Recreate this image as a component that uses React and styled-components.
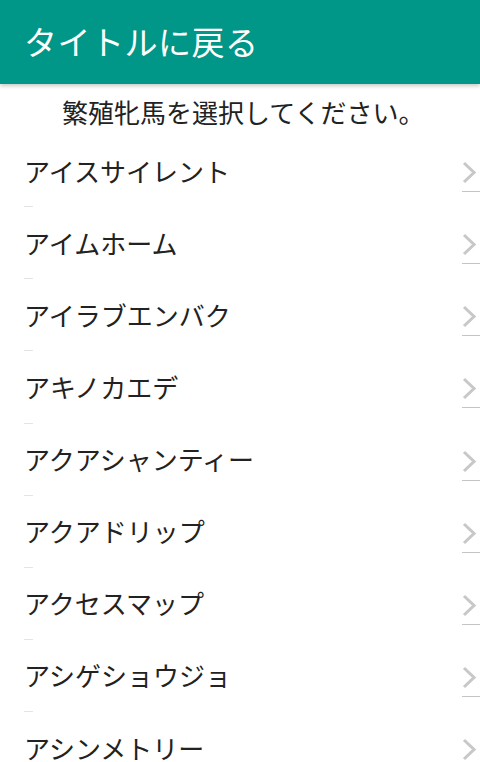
import React from 'react';
import styled, { createGlobalStyle } from 'styled-components';

const mares = [
  'アイスサイレント',
  'アイムホーム',
  'アイラブエンバク',
  'アキノカエデ',
  'アクアシャンティー',
  'アクアドリップ',
  'アクセスマップ',
  'アシゲショウジョ',
  'アシンメトリー',
];

const GlobalStyle = createGlobalStyle`
  html, body {
    margin: 0;
    padding: 0;
    background: #ffffff;
    overflow: hidden;
  }
  body {
    font-family: "Noto Sans CJK JP", "Noto Sans", sans-serif;
  }
`;

const Chevron = () => (
  <svg width="14" height="23" viewBox="0 0 14 23">
    <path d="M2 2 L12 11.5 L2 21" fill="none" stroke="#c8c8c8" strokeWidth="3" />
  </svg>
);

const App = () => {
  return (
    <>
      <GlobalStyle />
      <Screen>
        <Header>
          <HeaderTitle>タイトルに戻る</HeaderTitle>
        </Header>
        <SubTitle>繁殖牝馬を選択してください。</SubTitle>
        <List>
          {mares.map((name) => (
            <Item key={name}>
              <Body>
                <Name>{name}</Name>
                <ChevronCell>
                  <Chevron />
                </ChevronCell>
              </Body>
              <Stub />
            </Item>
          ))}
        </List>
      </Screen>
    </>
  );
};

const Screen = styled.div`
  width: 480px;
  height: 762px;
  overflow: hidden;
  display: flex;
  flex-direction: column;
`;

const Header = styled.div`
  height: 84px;
  flex-shrink: 0;
  background: #009688;
  display: flex;
  align-items: center;
  padding-left: 24px;
  padding-bottom: 2px;
  box-sizing: border-box;
  box-shadow: 0 2px 4px rgba(0, 0, 0, 0.22);
  position: relative;
  z-index: 2;
`;

const HeaderTitle = styled.h1`
  margin: 0;
  color: #ffffff;
  font-size: 33px;
  font-weight: 400;
  letter-spacing: 0.5px;
`;

const SubTitle = styled.div`
  height: 51px;
  flex-shrink: 0;
  box-sizing: border-box;
  padding: 8px 0 0 62px;
  font-size: 26px;
  line-height: 40px;
  color: #222222;
`;

const List = styled.div`
  display: flex;
  flex-direction: column;
`;

const Item = styled.div`
  display: flex;
  flex-direction: column;
  flex-shrink: 0;
`;

const Body = styled.div`
  height: 71.14px;
  display: flex;
  align-items: stretch;
`;

const Name = styled.div`
  flex: 1;
  display: flex;
  align-items: center;
  padding-left: 24px;
  padding-bottom: 1px;
  font-size: 26px;
  color: #222222;
`;

const ChevronCell = styled.div`
  width: 18px;
  height: 57px;
  box-sizing: border-box;
  padding-top: 26px;
  border-bottom: 1px solid #c4c4c4;
  display: flex;
  flex-direction: column;
  align-items: flex-start;
`;

const Stub = styled.div`
  margin-left: 24px;
  width: 9px;
  height: 1px;
  background: #e4e4e4;
`;

export default App;
